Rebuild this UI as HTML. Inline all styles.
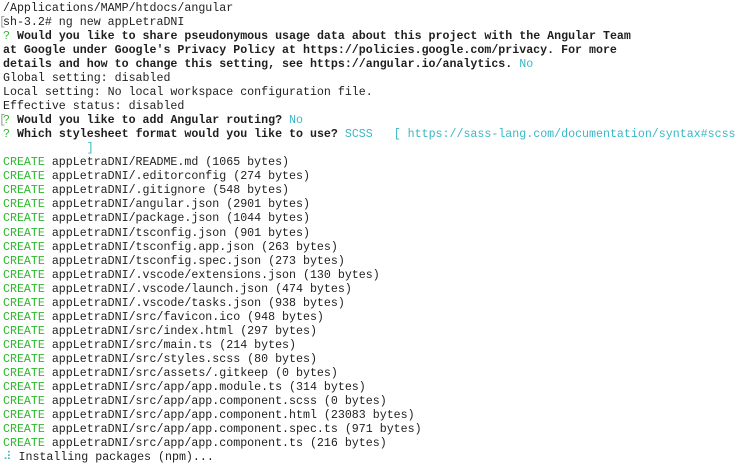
<!DOCTYPE html>
<html><head><meta charset="utf-8"><style>
html,body{margin:0;padding:0;background:#fff;width:742px;height:463px;overflow:hidden}
pre{margin:0;position:absolute;left:3px;top:2px;font-family:"Liberation Mono","DejaVu Sans Mono",monospace;font-size:11.63px;line-height:14.03px;color:#1e1e1e;white-space:pre}
b{font-weight:bold}
.g{color:#2db82d}.c{color:#3bb7c6}
.br{position:absolute;left:-1px;color:#999;font-family:"Liberation Mono",monospace;font-size:11.63px;line-height:14px}
</style></head><body>
<div class="br" style="top:16px">[</div>
<div class="br" style="top:114px">[</div>
<pre>/Applications/MAMP/htdocs/angular
sh-3.2# ng new appLetraDNI
<span class="g">?</span> <b>Would you like to share pseudonymous usage data about this project with the Angular Team</b>
<b>at Google under Google's Privacy Policy at https://policies.google.com/privacy. For more</b>
<b>details and how to change this setting, see https://angular.io/analytics.</b> <span class="c">No</span>
Global setting: disabled
Local setting: No local workspace configuration file.
Effective status: disabled
<span class="g">?</span> <b>Would you like to add Angular routing?</b> <span class="c">No</span>
<span class="g">?</span> <b>Which stylesheet format would you like to use?</b> <span class="c">SCSS   [ https://sass-lang.com/documentation/syntax#scss</span>
<span class="c">            ]</span>
<span class="g">CREATE</span> appLetraDNI/README.md (1065 bytes)
<span class="g">CREATE</span> appLetraDNI/.editorconfig (274 bytes)
<span class="g">CREATE</span> appLetraDNI/.gitignore (548 bytes)
<span class="g">CREATE</span> appLetraDNI/angular.json (2901 bytes)
<span class="g">CREATE</span> appLetraDNI/package.json (1044 bytes)
<span class="g">CREATE</span> appLetraDNI/tsconfig.json (901 bytes)
<span class="g">CREATE</span> appLetraDNI/tsconfig.app.json (263 bytes)
<span class="g">CREATE</span> appLetraDNI/tsconfig.spec.json (273 bytes)
<span class="g">CREATE</span> appLetraDNI/.vscode/extensions.json (130 bytes)
<span class="g">CREATE</span> appLetraDNI/.vscode/launch.json (474 bytes)
<span class="g">CREATE</span> appLetraDNI/.vscode/tasks.json (938 bytes)
<span class="g">CREATE</span> appLetraDNI/src/favicon.ico (948 bytes)
<span class="g">CREATE</span> appLetraDNI/src/index.html (297 bytes)
<span class="g">CREATE</span> appLetraDNI/src/main.ts (214 bytes)
<span class="g">CREATE</span> appLetraDNI/src/styles.scss (80 bytes)
<span class="g">CREATE</span> appLetraDNI/src/assets/.gitkeep (0 bytes)
<span class="g">CREATE</span> appLetraDNI/src/app/app.module.ts (314 bytes)
<span class="g">CREATE</span> appLetraDNI/src/app/app.component.scss (0 bytes)
<span class="g">CREATE</span> appLetraDNI/src/app/app.component.html (23083 bytes)
<span class="g">CREATE</span> appLetraDNI/src/app/app.component.spec.ts (971 bytes)
<span class="g">CREATE</span> appLetraDNI/src/app/app.component.ts (216 bytes)
<span class="c">⠼</span> Installing packages (npm)...</pre>
</body></html>
